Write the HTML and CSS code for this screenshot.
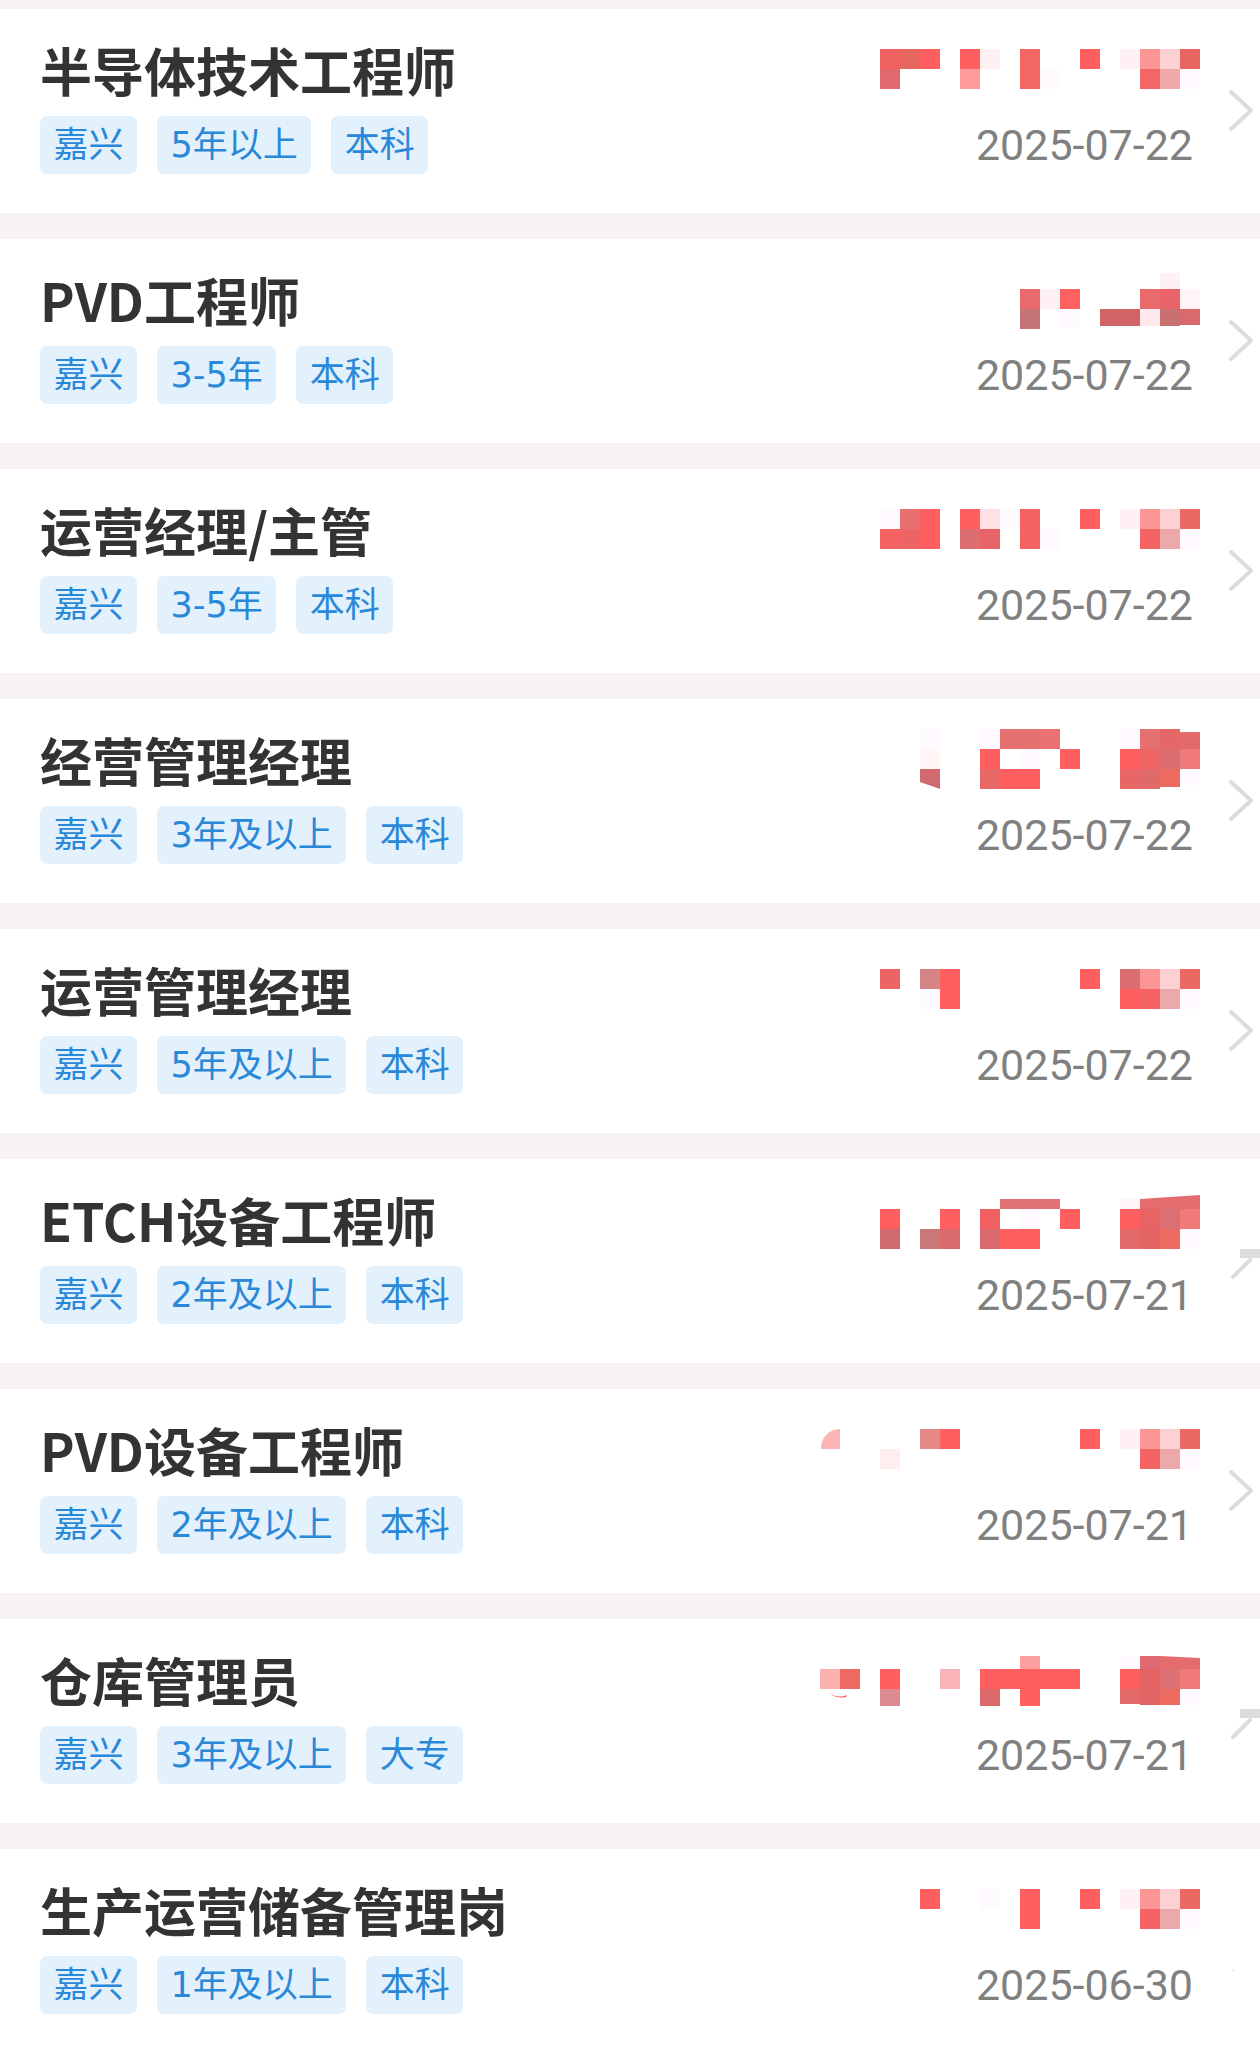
FILE: index.html
```html
<!DOCTYPE html>
<html lang="zh-CN">
<head>
    <meta charset="UTF-8">
    <meta name="viewport" content="width=device-width, initial-scale=1.0">
    <title>职位列表</title>
    <link rel="stylesheet" href="styles.css">
</head>
<body>
    <div class="job-list">

        <div class="job-card">
            <div class="job-info">
                <div class="job-title">半导体技术工程师</div>
                <div class="job-tags">
                    <span class="tag">嘉兴</span>
                    <span class="tag">5年以上</span>
                    <span class="tag">本科</span>
                </div>
            </div>
            <div class="job-side">
                <svg class="salary" width="380" height="60" viewBox="0 0 380 60">
                    <rect x="60" y="10" width="20" height="20" fill="#f06262"/>
                    <rect x="80" y="10" width="20" height="20" fill="#e86660"/>
                    <rect x="100" y="10" width="20" height="20" fill="#ff5f5f"/>
                    <rect x="140" y="10" width="20" height="20" fill="#ff5f5f"/>
                    <rect x="160" y="10" width="20" height="20" fill="#fff0f3"/>
                    <rect x="200" y="10" width="20" height="20" fill="#f46664"/>
                    <rect x="260" y="10" width="20" height="20" fill="#ff5f5f"/>
                    <rect x="300" y="10" width="20" height="20" fill="#fff0f3"/>
                    <rect x="320" y="10" width="20" height="20" fill="#fc9696"/>
                    <rect x="340" y="10" width="20" height="20" fill="#fdd0d3"/>
                    <rect x="360" y="10" width="20" height="20" fill="#e86662"/>
                    <rect x="60" y="30" width="20" height="20" fill="#e06a6e"/>
                    <rect x="140" y="30" width="20" height="20" fill="#fd9a9a"/>
                    <rect x="200" y="30" width="20" height="20" fill="#f46664"/>
                    <rect x="220" y="30" width="20" height="20" fill="#fffafd"/>
                    <rect x="320" y="30" width="20" height="20" fill="#f46666"/>
                    <rect x="340" y="30" width="20" height="20" fill="#f0a8a8"/>
                    <rect x="360" y="30" width="20" height="20" fill="#fffaff"/>
                </svg>
                <div class="job-date">2025-07-22</div>
            </div>
            <div class="job-arrow">
                <svg width="60" height="44" viewBox="0 0 60 44"><path class="chevron" d="M31 3 L51 21.5 L31 40"/></svg>
            </div>
        </div>

        <div class="job-card">
            <div class="job-info">
                <div class="job-title">PVD工程师</div>
                <div class="job-tags">
                    <span class="tag">嘉兴</span>
                    <span class="tag">3-5年</span>
                    <span class="tag">本科</span>
                </div>
            </div>
            <div class="job-side">
                <svg class="salary" width="380" height="60" viewBox="0 0 380 60">
                    <rect x="340" y="4" width="20" height="16" fill="#fff0f3"/>
                    <rect x="200" y="20" width="20" height="20" fill="#e86a6a"/>
                    <rect x="220" y="20" width="20" height="20" fill="#fff0f3"/>
                    <rect x="240" y="20" width="20" height="20" fill="#ff6060"/>
                    <rect x="320" y="20" width="20" height="20" fill="#e86a6a"/>
                    <rect x="340" y="20" width="20" height="20" fill="#e8646a"/>
                    <rect x="360" y="20" width="20" height="20" fill="#fff5f7"/>
                    <rect x="200" y="40" width="20" height="20" fill="#c47476"/>
                    <rect x="240" y="40" width="20" height="18" fill="#fffaff"/>
                    <rect x="280" y="40" width="40" height="17" fill="#d06466"/>
                    <rect x="320" y="40" width="20" height="17" fill="#ffe8ec"/>
                    <rect x="340" y="40" width="20" height="17" fill="#c87070"/>
                    <rect x="360" y="40" width="20" height="16" fill="#d86a6e"/>
                </svg>
                <div class="job-date">2025-07-22</div>
            </div>
            <div class="job-arrow">
                <svg width="60" height="44" viewBox="0 0 60 44"><path class="chevron" d="M31 3 L51 21.5 L31 40"/></svg>
            </div>
        </div>

        <div class="job-card">
            <div class="job-info">
                <div class="job-title">运营经理/主管</div>
                <div class="job-tags">
                    <span class="tag">嘉兴</span>
                    <span class="tag">3-5年</span>
                    <span class="tag">本科</span>
                </div>
            </div>
            <div class="job-side">
                <svg class="salary" width="380" height="60" viewBox="0 0 380 60">
                    <rect x="60" y="10" width="20" height="20" fill="#fffaff"/>
                    <rect x="80" y="10" width="20" height="20" fill="#e87070"/>
                    <rect x="100" y="10" width="20" height="20" fill="#ff5f5f"/>
                    <rect x="140" y="10" width="20" height="20" fill="#ff5f5f"/>
                    <rect x="160" y="10" width="20" height="20" fill="#ffe0e4"/>
                    <rect x="180" y="10" width="20" height="20" fill="#fffaff"/>
                    <rect x="200" y="10" width="20" height="20" fill="#f46262"/>
                    <rect x="260" y="10" width="20" height="20" fill="#ff5f5f"/>
                    <rect x="300" y="10" width="20" height="20" fill="#fff0f3"/>
                    <rect x="320" y="10" width="20" height="20" fill="#fc9696"/>
                    <rect x="340" y="10" width="20" height="20" fill="#fdd0d3"/>
                    <rect x="360" y="10" width="20" height="20" fill="#ec6862"/>
                    <rect x="60" y="30" width="20" height="20" fill="#f46262"/>
                    <rect x="80" y="30" width="20" height="20" fill="#ec6464"/>
                    <rect x="100" y="30" width="20" height="20" fill="#ff5f5f"/>
                    <rect x="140" y="30" width="20" height="20" fill="#dc6e72"/>
                    <rect x="160" y="30" width="20" height="20" fill="#e86468"/>
                    <rect x="200" y="30" width="20" height="20" fill="#f46262"/>
                    <rect x="220" y="30" width="20" height="20" fill="#fffaff"/>
                    <rect x="320" y="30" width="20" height="20" fill="#f46464"/>
                    <rect x="340" y="30" width="20" height="20" fill="#eca8aa"/>
                    <rect x="360" y="30" width="20" height="20" fill="#fffaff"/>
                </svg>
                <div class="job-date">2025-07-22</div>
            </div>
            <div class="job-arrow">
                <svg width="60" height="44" viewBox="0 0 60 44"><path class="chevron" d="M31 3 L51 21.5 L31 40"/></svg>
            </div>
        </div>

        <div class="job-card">
            <div class="job-info">
                <div class="job-title">经营管理经理</div>
                <div class="job-tags">
                    <span class="tag">嘉兴</span>
                    <span class="tag">3年及以上</span>
                    <span class="tag">本科</span>
                </div>
            </div>
            <div class="job-side">
                <svg class="salary" width="380" height="60" viewBox="0 0 380 60">
                    <rect x="100" y="0" width="20" height="20" fill="#fffaff"/>
                    <rect x="160" y="0" width="20" height="20" fill="#fffaff"/>
                    <rect x="180" y="0" width="40" height="20" fill="#e47070"/>
                    <rect x="220" y="0" width="20" height="20" fill="#ec7272"/>
                    <rect x="300" y="0" width="20" height="20" fill="#fffaff"/>
                    <rect x="320" y="0" width="20" height="20" fill="#e47070"/>
                    <rect x="340" y="0" width="20" height="20" fill="#e46868"/>
                    <rect x="360" y="3" width="20" height="17" fill="#e46a6a"/>
                    <rect x="100" y="20" width="20" height="20" fill="#fff5f5"/>
                    <rect x="160" y="20" width="20" height="20" fill="#ff5f5f"/>
                    <rect x="200" y="20" width="20" height="20" fill="#fffaff"/>
                    <rect x="240" y="20" width="20" height="20" fill="#ff5f5f"/>
                    <rect x="300" y="20" width="20" height="20" fill="#ff5f5f"/>
                    <rect x="320" y="20" width="20" height="20" fill="#f06666"/>
                    <rect x="340" y="20" width="20" height="20" fill="#dc6e72"/>
                    <rect x="360" y="20" width="20" height="20" fill="#f07a78"/>
                    <path d="M100 40 H120 V60 L100 53 Z" fill="#d06a70"/>
                    <rect x="160" y="40" width="20" height="20" fill="#e86868"/>
                    <rect x="180" y="40" width="40" height="20" fill="#ff5f5f"/>
                    <rect x="300" y="40" width="20" height="20" fill="#e86666"/>
                    <rect x="320" y="40" width="20" height="20" fill="#e06a6a"/>
                    <rect x="340" y="40" width="20" height="18" fill="#ec6a5e"/>
                    <rect x="360" y="40" width="20" height="16" fill="#fffaff"/>
                </svg>
                <div class="job-date">2025-07-22</div>
            </div>
            <div class="job-arrow">
                <svg width="60" height="44" viewBox="0 0 60 44"><path class="chevron" d="M31 3 L51 21.5 L31 40"/></svg>
            </div>
        </div>

        <div class="job-card">
            <div class="job-info">
                <div class="job-title">运营管理经理</div>
                <div class="job-tags">
                    <span class="tag">嘉兴</span>
                    <span class="tag">5年及以上</span>
                    <span class="tag">本科</span>
                </div>
            </div>
            <div class="job-side">
                <svg class="salary" width="380" height="60" viewBox="0 0 380 60">
                    <rect x="60" y="10" width="20" height="20" fill="#ec6464"/>
                    <rect x="100" y="10" width="20" height="20" fill="#d48484"/>
                    <rect x="120" y="10" width="20" height="20" fill="#ff5f5f"/>
                    <rect x="260" y="10" width="20" height="20" fill="#ff5f5f"/>
                    <rect x="300" y="10" width="20" height="20" fill="#dc6e72"/>
                    <rect x="320" y="10" width="20" height="20" fill="#fc9696"/>
                    <rect x="340" y="10" width="20" height="20" fill="#fdd0d3"/>
                    <rect x="360" y="10" width="20" height="20" fill="#ec6862"/>
                    <rect x="100" y="30" width="20" height="20" fill="#fffaff"/>
                    <rect x="120" y="30" width="20" height="20" fill="#ff5f5f"/>
                    <rect x="300" y="30" width="20" height="20" fill="#ff5f5f"/>
                    <rect x="320" y="30" width="20" height="20" fill="#f46464"/>
                    <rect x="340" y="30" width="20" height="20" fill="#eca8aa"/>
                    <rect x="360" y="30" width="20" height="20" fill="#fffaff"/>
                </svg>
                <div class="job-date">2025-07-22</div>
            </div>
            <div class="job-arrow">
                <svg width="60" height="44" viewBox="0 0 60 44"><path class="chevron" d="M31 3 L51 21.5 L31 40"/></svg>
            </div>
        </div>

        <div class="job-card">
            <div class="job-info">
                <div class="job-title">ETCH设备工程师</div>
                <div class="job-tags">
                    <span class="tag">嘉兴</span>
                    <span class="tag">2年及以上</span>
                    <span class="tag">本科</span>
                </div>
            </div>
            <div class="job-side">
                <svg class="salary" width="380" height="60" viewBox="0 0 380 60">
                    <rect x="180" y="10" width="60" height="10" fill="#e07072"/>
                    <rect x="300" y="10" width="20" height="10" fill="#fff5f8"/>
                    <path d="M320 10 L380 6 V20 H320 Z" fill="#e46c6c"/>
                    <rect x="60" y="20" width="20" height="20" fill="#ff5f5f"/>
                    <rect x="120" y="20" width="20" height="20" fill="#ff5f5f"/>
                    <rect x="160" y="20" width="20" height="20" fill="#f06060"/>
                    <rect x="200" y="20" width="20" height="20" fill="#fffaff"/>
                    <rect x="240" y="20" width="20" height="20" fill="#ff5f5f"/>
                    <rect x="300" y="20" width="20" height="20" fill="#ff5f5f"/>
                    <rect x="320" y="20" width="20" height="20" fill="#e86464"/>
                    <rect x="340" y="20" width="20" height="20" fill="#d87074"/>
                    <rect x="360" y="20" width="20" height="20" fill="#f07a78"/>
                    <rect x="60" y="40" width="20" height="20" fill="#d06a70"/>
                    <rect x="100" y="40" width="20" height="20" fill="#c87878"/>
                    <rect x="120" y="40" width="20" height="20" fill="#d86a6c"/>
                    <rect x="160" y="40" width="20" height="20" fill="#d86a6e"/>
                    <rect x="180" y="40" width="40" height="20" fill="#ff5f5f"/>
                    <rect x="300" y="40" width="20" height="20" fill="#e46a6a"/>
                    <rect x="320" y="40" width="20" height="20" fill="#e46464"/>
                    <rect x="340" y="40" width="20" height="20" fill="#ec6a62"/>
                    <rect x="360" y="40" width="20" height="20" fill="#fffaff"/>
                </svg>
                <div class="job-date">2025-07-21</div>
            </div>
            <div class="job-arrow">
                <svg width="60" height="44" viewBox="0 0 60 44">
                    <path class="chevron" d="M33 38 L50 21"/>
                    <rect class="chevron-cap" x="40" y="10" width="20" height="9"/>
                </svg>
            </div>
        </div>

        <div class="job-card">
            <div class="job-info">
                <div class="job-title">PVD设备工程师</div>
                <div class="job-tags">
                    <span class="tag">嘉兴</span>
                    <span class="tag">2年及以上</span>
                    <span class="tag">本科</span>
                </div>
            </div>
            <div class="job-side">
                <svg class="salary" width="380" height="60" viewBox="0 0 380 60">
                    <path d="M20 10 V30 H1 A19 19 0 0 1 20 10 Z" fill="#fcb4b4"/>
                    <rect x="100" y="10" width="20" height="20" fill="#e48888"/>
                    <rect x="120" y="10" width="20" height="20" fill="#ff5f5f"/>
                    <rect x="260" y="10" width="20" height="20" fill="#ff5f5f"/>
                    <rect x="300" y="10" width="20" height="20" fill="#fff0f3"/>
                    <rect x="320" y="10" width="20" height="20" fill="#fc9696"/>
                    <rect x="340" y="10" width="20" height="20" fill="#fdd0d3"/>
                    <rect x="360" y="10" width="20" height="20" fill="#ec6862"/>
                    <rect x="60" y="30" width="20" height="20" fill="#ffeef0"/>
                    <rect x="320" y="30" width="20" height="20" fill="#f46464"/>
                    <rect x="340" y="30" width="20" height="20" fill="#eca8aa"/>
                    <rect x="360" y="30" width="20" height="20" fill="#fffaff"/>
                </svg>
                <div class="job-date">2025-07-21</div>
            </div>
            <div class="job-arrow">
                <svg width="60" height="44" viewBox="0 0 60 44"><path class="chevron" d="M31 3 L51 21.5 L31 40"/></svg>
            </div>
        </div>

        <div class="job-card">
            <div class="job-info">
                <div class="job-title">仓库管理员</div>
                <div class="job-tags">
                    <span class="tag">嘉兴</span>
                    <span class="tag">3年及以上</span>
                    <span class="tag">大专</span>
                </div>
            </div>
            <div class="job-side">
                <svg class="salary" width="380" height="60" viewBox="0 0 380 60">
                    <rect x="200" y="7" width="20" height="13" fill="#fca0a0"/>
                    <rect x="300" y="7" width="20" height="13" fill="#fffaff"/>
                    <rect x="320" y="7" width="20" height="13" fill="#e06a72"/>
                    <path d="M340 7 L380 9 V20 H340 Z" fill="#e46c6c"/>
                    <rect x="0" y="20" width="20" height="20" fill="#fcb0b0"/>
                    <rect x="20" y="20" width="20" height="20" fill="#ec6a64"/>
                    <rect x="60" y="20" width="20" height="20" fill="#ff5f5f"/>
                    <rect x="120" y="20" width="20" height="20" fill="#f8b4b8"/>
                    <rect x="160" y="20" width="100" height="20" fill="#ff5f5f"/>
                    <rect x="300" y="20" width="20" height="20" fill="#ff5f5f"/>
                    <rect x="320" y="20" width="20" height="20" fill="#e46464"/>
                    <rect x="340" y="20" width="20" height="20" fill="#dc7074"/>
                    <rect x="360" y="20" width="20" height="20" fill="#f07a78"/>
                    <path d="M10 44 Q18 50 27 46 L26 48 Q16 50 10 44 Z" fill="#f06060"/>
                    <rect x="60" y="40" width="20" height="17" fill="#dc8a90"/>
                    <rect x="160" y="40" width="20" height="17" fill="#dc6a6c"/>
                    <rect x="200" y="40" width="20" height="17" fill="#ff5f5f"/>
                    <rect x="300" y="40" width="20" height="15" fill="#e46a6a"/>
                    <rect x="320" y="40" width="20" height="16" fill="#e06464"/>
                    <rect x="340" y="40" width="20" height="16" fill="#ec6a60"/>
                    <rect x="360" y="40" width="20" height="16" fill="#fffaff"/>
                </svg>
                <div class="job-date">2025-07-21</div>
            </div>
            <div class="job-arrow">
                <svg width="60" height="44" viewBox="0 0 60 44">
                    <path class="chevron" d="M33 38 L50 21"/>
                    <rect class="chevron-cap" x="40" y="10" width="20" height="9"/>
                </svg>
            </div>
        </div>

        <div class="job-card">
            <div class="job-info">
                <div class="job-title">生产运营储备管理岗</div>
                <div class="job-tags">
                    <span class="tag">嘉兴</span>
                    <span class="tag">1年及以上</span>
                    <span class="tag">本科</span>
                </div>
            </div>
            <div class="job-side">
                <svg class="salary" width="380" height="60" viewBox="0 0 380 60">
                    <rect x="100" y="10" width="20" height="20" fill="#ff5f5f"/>
                    <rect x="160" y="10" width="20" height="20" fill="#fffaff"/>
                    <rect x="200" y="10" width="20" height="20" fill="#ff5f5f"/>
                    <rect x="260" y="10" width="20" height="20" fill="#ff5f5f"/>
                    <rect x="300" y="10" width="20" height="20" fill="#fff0f3"/>
                    <rect x="320" y="10" width="20" height="20" fill="#fc9696"/>
                    <rect x="340" y="10" width="20" height="20" fill="#fdd0d3"/>
                    <rect x="360" y="10" width="20" height="20" fill="#ec6862"/>
                    <rect x="200" y="30" width="20" height="20" fill="#ff5f5f"/>
                    <rect x="320" y="30" width="20" height="20" fill="#f46464"/>
                    <rect x="340" y="30" width="20" height="20" fill="#eca8aa"/>
                    <rect x="360" y="30" width="20" height="20" fill="#fffaff"/>
                </svg>
                <div class="job-date">2025-06-30</div>
            </div>
            <div class="job-arrow">
                <svg width="60" height="44" viewBox="0 0 60 44"><path class="chevron-mark" d="M32 41 L35 42"/></svg>
            </div>
        </div>

    </div>
</body>
</html>
```

FILE: styles.css
```css
:root {
    --page-bg: #f6f2f5;
    --card-bg: #fff;
    --title-color: #333;
    --tag-bg: #e3f1fd;
    --tag-color: #2a88d8;
    --date-color: #808080;
    --arrow-color: #dcdcdc;
}

html, body {
    margin: 0;
    padding: 0;
}

body {
    background-color: var(--page-bg);
    font-family: "Noto Sans CJK SC", "Noto Sans", sans-serif;
}

.job-list {
    padding-top: 9px;
}

.job-card {
    display: flex;
    height: 204px;
    margin-bottom: 26px;
    background-color: var(--card-bg);
}

.job-info {
    flex: 1;
    padding: 35px 0 0 40px;
}

.job-title {
    font-size: 52px;
    line-height: 52px;
    font-weight: 700;
    color: var(--title-color);
    white-space: nowrap;
}

.job-tags {
    display: flex;
    gap: 20px;
    margin-top: 20px;
}

/* latin digits in the tags run a little wider than the CJK font's own */
.tag {
    height: 58px;
    padding: 0 13.5px;
    font-family: "DejaVu Sans", "Noto Sans CJK SC", sans-serif;
    font-size: 35px;
    line-height: 58px;
    color: var(--tag-color);
    background-color: var(--tag-bg);
    border-radius: 7px;
}

.job-side {
    width: 380px;
    padding-top: 30px;
    text-align: right;
}

.salary {
    display: block;
}

.job-date {
    margin-top: 21px;
    padding-right: 7px;
    font-family: Roboto, "Liberation Sans", sans-serif;
    font-size: 43px;
    line-height: 50px;
    color: var(--date-color);
}

.job-arrow {
    width: 60px;
    padding-top: 80px;
}

.job-arrow svg {
    display: block;
}

.chevron {
    fill: none;
    stroke: var(--arrow-color);
    stroke-width: 4;
    stroke-linecap: round;
    stroke-linejoin: round;
}

.chevron-cap {
    fill: var(--arrow-color);
}

.chevron-mark {
    fill: none;
    stroke: #e6e6e6;
    stroke-width: 1.5;
}
```
